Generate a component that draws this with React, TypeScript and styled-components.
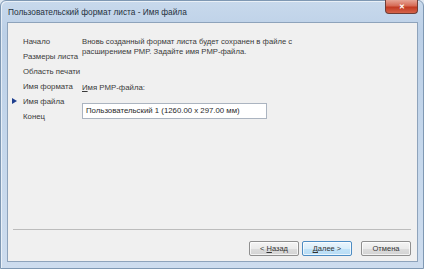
import React from "react";
import styled, { createGlobalStyle } from "styled-components";

const Global = createGlobalStyle`
  html, body { margin: 0; padding: 0; }
  body {
    width: 424px;
    height: 269px;
    overflow: hidden;
    background: #dfe8f2;
    font-family: "Liberation Sans", "Noto Sans", Arial, sans-serif;
  }
`;

const Window = styled.div`
  box-sizing: border-box;
  width: 424px;
  height: 269px;
  display: flex;
  flex-direction: column;
  border: 1px solid #7f98b3;
  border-radius: 6px 6px 0 0;
  background: linear-gradient(180deg, #c8d9ec 0%, #bcd0e7 12%, #c6d8ec 60%, #cddcee 100%);
  box-shadow: inset 1px 1px 0 rgba(255, 255, 255, 0.6);
`;

const TitleBar = styled.div`
  height: 21px;
  display: flex;
  align-items: flex-start;
  justify-content: space-between;
  padding-left: 7px;
  padding-right: 5px;
`;

const Title = styled.span`
  font-size: 8.3px;
  line-height: 23px;
  color: #26313d;
  white-space: nowrap;
`;

const CloseButton = styled.div`
  width: 31px;
  height: 13px;
  margin-top: -1px;
  display: flex;
  align-items: center;
  justify-content: center;
  border: 1px solid #6f3d36;
  border-top: none;
  border-radius: 0 0 4px 4px;
  background: linear-gradient(180deg, #e6a495 0%, #d66a55 45%, #c23a22 55%, #d5644a 100%);
  color: #fff;
  font-size: 7px;
  font-weight: bold;
`;

const Client = styled.div`
  flex: 1;
  margin: 0 5px 6px 6px;
  display: flex;
  flex-direction: column;
  background: #f0f0f0;
  border: 1px solid #8ea3bb;
`;

const Content = styled.div`
  flex: 1;
  display: flex;
  padding-top: 11px;
`;

const Nav = styled.ul`
  list-style: none;
  margin: 0;
  padding: 0;
  width: 74px;
`;

const NavItem = styled.li`
  position: relative;
  height: 15px;
  line-height: 15px;
  padding-left: 15px;
  font-size: 7.8px;
  color: #3a3a3a;
  white-space: nowrap;
`;

const Arrow = styled.span`
  position: absolute;
  left: 4px;
  top: 4px;
  width: 0;
  height: 0;
  border-top: 3.5px solid transparent;
  border-bottom: 3.5px solid transparent;
  border-left: 5px solid #1f3f8f;
`;

const Main = styled.div`
  flex: 1;
  padding-top: 3px;
  display: flex;
  flex-direction: column;
  align-items: flex-start;
`;

const Paragraph = styled.p`
  margin: 0;
  font-size: 7.7px;
  line-height: 9.5px;
  color: #3a3a3a;
  width: 230px;
`;

const FieldLabel = styled.div`
  margin-top: 27px;
  font-size: 7.8px;
  line-height: 10px;
  color: #3a3a3a;
`;

const Key = styled.span`
  text-decoration: underline;
`;

const Input = styled.div`
  box-sizing: border-box;
  margin-top: 10px;
  width: 185px;
  height: 16px;
  padding-left: 3px;
  background: #fff;
  border: 1px solid #abb4c0;
  font-size: 7.8px;
  line-height: 14px;
  color: #2a2a2a;
  white-space: nowrap;
`;

const Footer = styled.div`
  margin: 0 6px 0 5px;
  border-top: 1px solid #bcbcbc;
  padding: 11px 0 5px;
  display: flex;
  justify-content: flex-end;
  gap: 3px;
`;

const Button = styled.button<{ $primary?: boolean; $gapBefore?: boolean }>`
  box-sizing: border-box;
  width: 50px;
  height: 15px;
  padding: 0;
  margin-left: ${(p) => (p.$gapBefore ? "6px" : "0")};
  border: 1px solid ${(p) => (p.$primary ? "#4d8cc3" : "#8f8f8f")};
  border-radius: 2px;
  background: ${(p) =>
    p.$primary
      ? "linear-gradient(180deg, #eaf5fd 0%, #d9eefb 50%, #c2e3f8 51%, #b7dcf5 100%)"
      : "linear-gradient(180deg, #f4f4f4 0%, #ebebeb 50%, #dddddd 51%, #d2d2d2 100%)"};
  box-shadow: inset 0 0 0 1px rgba(255, 255, 255, 0.7);
  font-family: "Liberation Sans", "Noto Sans", Arial, sans-serif;
  font-size: 7.5px;
  line-height: 13px;
  color: #333;
`;

const steps = ["Начало", "Размеры листа", "Область печати", "Имя формата", "Имя файла", "Конец"];
const activeStep = 4;

export default function App() {
  return (
    <>
      <Global />
      <Window>
        <TitleBar>
          <Title>Пользовательский формат листа - Имя файла</Title>
          <CloseButton>✕</CloseButton>
        </TitleBar>
        <Client>
          <Content>
            <Nav>
              {steps.map((s, i) => (
                <NavItem key={s}>
                  {i === activeStep && <Arrow />}
                  {s}
                </NavItem>
              ))}
            </Nav>
            <Main>
              <Paragraph>
                Вновь созданный формат листа будет сохранен в файле с расширением PMP. Задайте имя PMP-файла.
              </Paragraph>
              <FieldLabel>
                <Key>И</Key>мя PMP-файла:
              </FieldLabel>
              <Input>Пользовательский 1 (1260.00 x 297.00 мм)</Input>
            </Main>
          </Content>
          <Footer>
            <Button>
              &lt; <Key>Н</Key>азад
            </Button>
            <Button $primary>
              <Key>Д</Key>алее &gt;
            </Button>
            <Button $gapBefore>Отмена</Button>
          </Footer>
        </Client>
      </Window>
    </>
  );
}
